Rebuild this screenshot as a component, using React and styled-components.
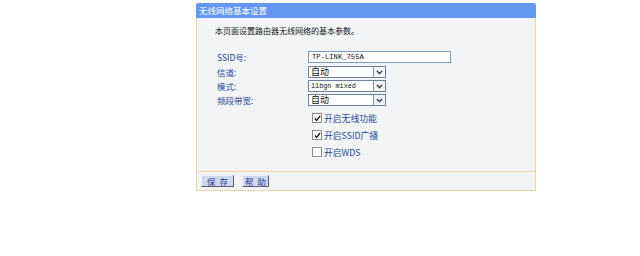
import React from 'react';
import styled, { createGlobalStyle } from 'styled-components';

const Global = createGlobalStyle`
  html, body { margin: 0; padding: 0; background: #ffffff; }
  body { font-family: "Noto Sans CJK SC", "DejaVu Sans", sans-serif; }
`;

const Page = styled.div`
  width: 640px;
  height: 256px;
  padding-top: 3px;
  box-sizing: border-box;
`;

const Panel = styled.div`
  margin-left: 196px;
  width: 340px;
`;

const Header = styled.div`
  height: 15px;
  background: #6397f1;
  color: #ffffff;
  font-size: 8.5px;
  line-height: 15px;
  padding-left: 3px;
  border-radius: 2px 2px 0 0;
`;

const Body = styled.div`
  background: #f3f4f6;
  border: 1px solid #efd6a6;
  border-top: none;
  border-bottom: none;
  padding: 8px 0 0 18px;
  height: 153px;
  box-sizing: border-box;
`;

const Intro = styled.div`
  font-size: 8px;
  line-height: 10px;
  color: #141420;
  margin-bottom: 15px;
`;

const Form = styled.div`
  display: grid;
  grid-template-columns: 91px 1fr;
  row-gap: 2px;
  padding-left: 2px;
`;

const Label = styled.div`
  font-size: 8.5px;
  line-height: 12px;
  height: 12px;
  color: #2a4896;
  display: flex;
  align-items: center;
  margin-top: ${p => (p.first ? '1px' : '0')};
`;

const TextBox = styled.div`
  width: 138px;
  height: 10px;
  border: 1px solid #7f9db9;
  background: #ffffff;
  font-family: "Liberation Mono", monospace;
  font-size: 7.2px;
  line-height: 10px;
  padding-left: 3px;
  color: #111;
`;

const SelectBox = styled.div`
  width: 76px;
  height: 10px;
  border: 1px solid #6f7f96;
  background: #ffffff;
  display: flex;
  align-items: stretch;
  margin-top: ${p => (p.first ? '1px' : '0')};
`;

const SelectText = styled.div`
  flex: 1;
  font-family: ${p => (p.mono ? '"Liberation Mono", monospace' : '"Noto Sans CJK SC", sans-serif')};
  font-size: ${p => (p.mono ? '6.8px' : '9px')};
  line-height: 10px;
  padding-left: 2px;
  color: #111;
  white-space: nowrap;
`;

const Arrow = styled.div`
  width: 11px;
  border-left: 1px solid #8a96a8;
  background: #eef1f6;
  display: flex;
  align-items: center;
  justify-content: center;
`;

const Checks = styled.div`
  display: flex;
  flex-direction: column;
  gap: 5px;
  margin: 6px 0 0 97px;
`;

const CheckRow = styled.div`
  display: flex;
  align-items: center;
  height: 12px;
  font-size: 8.8px;
  color: #2a4896;
  gap: 2px;
`;

const Box = styled.div`
  width: 8px;
  height: 8px;
  border: 1px solid #8c8c8c;
  background: #ffffff;
  display: flex;
  align-items: center;
  justify-content: center;
`;

const Footer = styled.div`
  background: #f2f3f5;
  border: 1px solid #efd6a6;
  height: 20px;
  box-sizing: border-box;
  display: flex;
  align-items: center;
  gap: 8px;
  padding-left: 4px;
`;

const Button = styled.div`
  width: ${p => p.w}px;
  height: 12px;
  box-sizing: border-box;
  background: #cfd6f2;
  border: 1px solid;
  border-color: #eef0fb #5f5f6c #5f5f6c #eef0fb;
  font-size: 8.5px;
  color: #1f3c88;
  white-space: nowrap;
  display: flex;
  align-items: center;
  justify-content: center;
  gap: 4px;
`;

function Select({ value, mono, first }) {
  return (
    <SelectBox first={first}>
      <SelectText mono={mono}>{value}</SelectText>
      <Arrow>
        <svg width="7" height="5" viewBox="0 0 7 5">
          <polyline points="0.8,0.8 3.5,3.6 6.2,0.8" fill="none" stroke="#222" strokeWidth="1.2" />
        </svg>
      </Arrow>
    </SelectBox>
  );
}

function Check({ checked, children }) {
  return (
    <CheckRow>
      <Box>
        {checked && (
          <svg width="7" height="7" viewBox="0 0 8 8">
            <polyline points="1,4 3,6.3 7,1.2" fill="none" stroke="#222" strokeWidth="1.6" />
          </svg>
        )}
      </Box>
      {children}
    </CheckRow>
  );
}

export default function App() {
  return (
    <Page>
      <Global />
      <Panel>
        <Header>无线网络基本设置</Header>
        <Body>
          <Intro>本页面设置路由器无线网络的基本参数。</Intro>
          <Form>
            <Label>SSID号:</Label>
            <TextBox>TP-LINK_755A</TextBox>
            <Label first>信道:</Label>
            <Select value="自动" first />
            <Label>模式:</Label>
            <Select value="11bgn mixed" mono />
            <Label>频段带宽:</Label>
            <Select value="自动" />
          </Form>
          <Checks>
            <Check checked>开启无线功能</Check>
            <Check checked>开启SSID广播</Check>
            <Check>开启WDS</Check>
          </Checks>
        </Body>
        <Footer>
          <Button w={33}><span>保</span><span>存</span></Button>
          <Button w={27}><span>帮</span><span>助</span></Button>
        </Footer>
      </Panel>
    </Page>
  );
}
